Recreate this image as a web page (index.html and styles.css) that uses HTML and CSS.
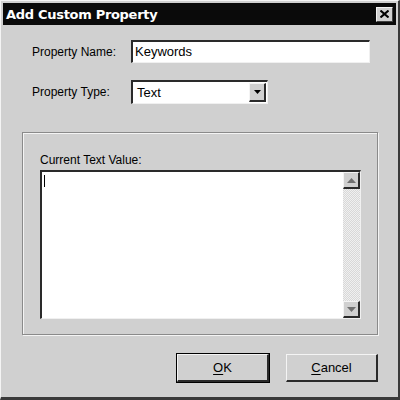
FILE: index.html
```html
<!DOCTYPE html>
<html>
<head>
<meta charset="utf-8">
<link rel="stylesheet" href="styles.css">
</head>
<body>
<div class="dialog">
  <div class="titlebar">
    <span class="title">Add Custom Property</span>
    <span class="close"><svg width="9" height="8" viewBox="0 0 9 8"><path d="M0.5 0.5 L8.5 7.5 M8.5 0.5 L0.5 7.5" stroke="#000" stroke-width="2" fill="none"/></svg></span>
  </div>
  <div class="body">
    <div class="row row-name">
      <label class="lbl">Property Name:</label>
      <div class="field name-field">Keywords</div>
    </div>
    <div class="row row-type">
      <label class="lbl">Property Type:</label>
      <div class="field type-field">
        <span class="type-text">Text</span>
        <span class="drop"><svg width="7" height="4" viewBox="0 0 7 4"><path d="M0 0 H7 L3.5 4 Z" fill="#000"/></svg></span>
      </div>
    </div>
    <div class="group">
      <div class="group-label">Current Text Value:</div>
      <div class="textarea">
        <div class="text-area-main"><span class="caret"></span></div>
        <div class="scroll">
          <span class="sbtn"><svg width="9" height="5" viewBox="0 0 9 5"><path d="M4.5 0 L9 5 H0 Z" fill="#707070"/></svg></span>
          <span class="track"></span>
          <span class="sbtn"><svg width="9" height="5" viewBox="0 0 9 5"><path d="M0 0 H9 L4.5 5 Z" fill="#707070"/></svg></span>
        </div>
      </div>
    </div>
    <div class="buttons">
      <div class="btn btn-default"><span><u>O</u>K</span></div>
      <div class="btn"><span><u>C</u>ancel</span></div>
    </div>
  </div>
</div>
</body>
</html>
```
FILE: styles.css
```css
html, body {
  margin: 0;
  padding: 0;
  background: #d0d0d0;
}
.dialog {
  width: 400px;
  height: 400px;
  box-sizing: border-box;
  background: #d0d0d0;
  border-left: 1px solid #f4f4f4;
  border-top: 1px solid #f4f4f4;
  border-right: 2px solid #3a3a3a;
  border-bottom: 3px solid #3a3a3a;
  padding: 2px 2px 0 2px;
  font-family: "Liberation Sans", Arial, sans-serif;
  font-size: 12px;
  color: #000;
  display: flex;
  flex-direction: column;
}
.titlebar {
  height: 22px;
  background: #0a0a0a;
  display: flex;
  align-items: center;
  justify-content: space-between;
  padding: 0 3px 0 3px;
}
.title {
  color: #fff;
  font-family: "DejaVu Sans", "Liberation Sans", sans-serif;
  font-weight: bold;
  font-size: 13px;
  letter-spacing: -0.3px;
}
.close {
  width: 15px;
  height: 13px;
  background: #d0d0d0;
  border-top: 1px solid #f4f4f4;
  border-left: 1px solid #f4f4f4;
  border-right: 1px solid #404040;
  border-bottom: 1px solid #404040;
  display: flex;
  align-items: center;
  justify-content: center;
}
.body {
  flex: 1;
  display: flex;
  flex-direction: column;
  padding: 15px 20px 0 17px;
}
.row {
  display: flex;
  align-items: center;
}
.lbl {
  width: 99px;
  padding-left: 12px;
  font-size: 12px;
}
.field {
  box-sizing: border-box;
  background: #fff;
  border-top: 2px solid #2a2a2a;
  border-left: 2px solid #2a2a2a;
  border-right: 1px solid #f0f0f0;
  border-bottom: 1px solid #f0f0f0;
  font-size: 13px;
}
.name-field {
  width: 239px;
  height: 23px;
  line-height: 20px;
  padding-left: 2px;
}
.row-type {
  margin-top: 17px;
}
.type-field {
  width: 137px;
  height: 24px;
  display: flex;
  align-items: center;
  justify-content: space-between;
  padding-right: 1px;
}
.type-text {
  padding-left: 4px;
}
.drop {
  width: 17px;
  height: 19px;
  box-sizing: border-box;
  background: #d0d0d0;
  border-top: 1px solid #f4f4f4;
  border-left: 1px solid #f4f4f4;
  border-right: 2px solid #2a2a2a;
  border-bottom: 2px solid #2a2a2a;
  display: flex;
  align-items: center;
  justify-content: center;
}
.group {
  margin-top: 28px;
  margin-left: 2px;
  width: 356px;
  height: 203px;
  box-sizing: border-box;
  border: 1px solid #8a8a8a;
  box-shadow: inset 1px 1px 0 #f4f4f4, 1px 1px 0 #f4f4f4;
  padding: 20px 16px 0 17px;
  display: flex;
  flex-direction: column;
}
.group-label {
  font-size: 12px;
  line-height: 14px;
  margin-bottom: 3px;
}
.textarea {
  width: 321px;
  height: 149px;
  box-sizing: border-box;
  border-top: 2px solid #2a2a2a;
  border-left: 2px solid #2a2a2a;
  border-right: 1px solid #f0f0f0;
  border-bottom: 1px solid #f0f0f0;
  background: #fff;
  display: flex;
}
.text-area-main {
  flex: 1;
  position: relative;
}
.caret {
  position: absolute;
  left: 2px;
  top: 3px;
  width: 1px;
  height: 12px;
  background: #000;
}
.scroll {
  width: 17px;
  display: flex;
  flex-direction: column;
  background: repeating-conic-gradient(#f0f0f0 0 25%, #d8d8d8 0 50%) 0 0 / 2px 2px;
}
.sbtn {
  width: 17px;
  height: 17px;
  box-sizing: border-box;
  background: #d0d0d0;
  border-top: 1px solid #f4f4f4;
  border-left: 1px solid #f4f4f4;
  border-right: 2px solid #2a2a2a;
  border-bottom: 2px solid #2a2a2a;
  display: flex;
  align-items: center;
  justify-content: center;
}
.track {
  flex: 1;
}
.buttons {
  display: flex;
  justify-content: flex-end;
  gap: 17px;
  margin-top: 19px;
  margin-right: -2px;
}
.btn {
  width: 92px;
  height: 28px;
  box-sizing: border-box;
  background: #d0d0d0;
  border-top: 1px solid #f4f4f4;
  border-left: 1px solid #f4f4f4;
  border-right: 2px solid #2a2a2a;
  border-bottom: 2px solid #2a2a2a;
  display: flex;
  align-items: center;
  justify-content: center;
  font-size: 13px;
}
.btn-default {
  outline: 1px solid #000;
}
u {
  text-decoration: underline;
  text-underline-offset: 2px;
}
```
